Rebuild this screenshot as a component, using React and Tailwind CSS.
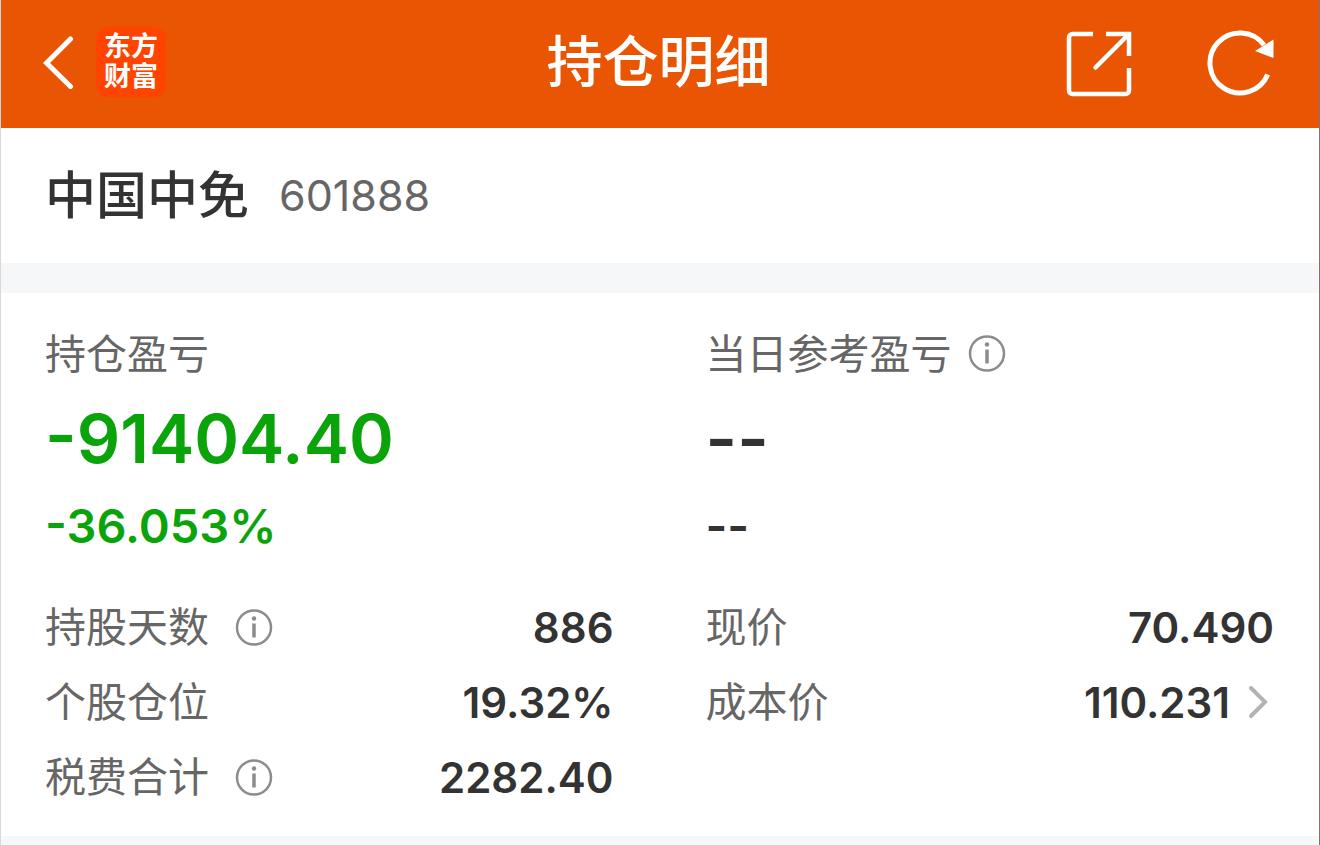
const cjk = "font-['Inter','Noto_Sans_CJK_SC',sans-serif]";

function BackIcon() {
  return (
    <svg viewBox="0 0 32 54" className="h-[54px] w-8" fill="none" stroke="currentColor" strokeWidth="5" strokeLinecap="round" aria-hidden="true">
      <path d="M27.500 4 3.500 28l24 23.500" />
    </svg>
  );
}

function ShareIcon() {
  return (
    <svg viewBox="0 0 66 66" className="h-[66px] w-[66px]" fill="none" stroke="currentColor" strokeWidth="4.5" aria-hidden="true">
      <path d="M27 3H6.500a3.500 3.500 0 0 0-3.500 3.500v53a3.500 3.500 0 0 0 3.500 3.500h53a3.500 3.500 0 0 0 3.500-3.500V37" />
      <path d="M40 3h23v22" />
      <path d="M62 4 29.500 36.500" strokeLinecap="round" />
    </svg>
  );
}

function RefreshIcon() {
  return (
    <svg viewBox="0 0 68 68" className="h-[68px] w-[68px]" fill="none" stroke="currentColor" strokeWidth="5" aria-hidden="true">
      <path d="M58 15A30 30 0 1 0 61.700 44.500" />
      <path d="M49 21 67.500 9.500v18.500z" fill="currentColor" stroke="none" />
    </svg>
  );
}

function InfoButton({ label }) {
  return (
    <button type="button" aria-label={label} className="text-[#8c8c8c]">
      <svg viewBox="0 0 38 38" className="h-[38px] w-[38px]" fill="none" stroke="currentColor" strokeWidth="2.5" aria-hidden="true">
        <circle cx="19" cy="18.500" r="17" />
        <path d="M19 14.500v14" strokeWidth="3.500" />
        <circle cx="19" cy="9.500" r="2.200" fill="currentColor" stroke="none" />
      </svg>
    </button>
  );
}

function Chevron() {
  return (
    <svg viewBox="0 0 20 36" className="h-9 w-5 text-[#b3b3b3]" fill="none" stroke="currentColor" strokeWidth="4" strokeLinecap="round" aria-hidden="true">
      <path d="M3 3 17 17 3 31" />
    </svg>
  );
}

function Row({ label, value, info, link }) {
  return (
    <div className="flex h-[75px] items-center justify-between">
      <dt className="flex items-center gap-[26px] text-[41px] text-[#666]">
        {label}
        {info && <InfoButton label={label + "说明"} />}
      </dt>
      <dd className="text-[42px] font-semibold text-[#333]">
        {link ? (
          <a href="#cost" className="flex items-center gap-[18px] pr-[6px]">
            {value}
            <Chevron />
          </a>
        ) : (
          value
        )}
      </dd>
    </div>
  );
}

function Profit({ title, info, amount, rate, tone }) {
  return (
    <div>
      <h2 className="flex h-[62px] items-center gap-4 text-[41px] text-[#666]">
        {title}
        {info && <InfoButton label={title + "说明"} />}
      </h2>
      <p className={"flex h-[106px] items-center text-[68px] font-semibold " + tone}>{amount}</p>
      <p className={"flex h-[68px] items-center text-[47px] font-semibold " + tone}>{rate}</p>
    </div>
  );
}

export default function App() {
  return (
    <div lang="zh-CN" className={"flex min-h-screen flex-col border-l border-r border-l-[#d9d9d9] border-r-[#777] bg-[#f6f7f9] leading-none " + cjk}>
      <header className="grid h-32 shrink-0 grid-cols-[1fr_auto_1fr] items-center bg-[#ea5504] pr-[45px] pl-[42px] text-white">
        <div className="flex items-center gap-[21px] pb-1">
          <button type="button" aria-label="返回">
            <BackIcon />
          </button>
          <span className="grid h-[70px] w-[70px] place-content-center rounded-[12px] bg-[#ff4400] text-[27px] leading-[30px] font-bold">
            <span>东方</span>
            <span>财富</span>
          </span>
        </div>
        <h1 className="pb-1 text-[56px] font-medium">持仓明细</h1>
        <div className="flex items-center justify-end gap-[74px]">
          <button type="button" aria-label="分享">
            <ShareIcon />
          </button>
          <button type="button" aria-label="刷新">
            <RefreshIcon />
          </button>
        </div>
      </header>

      <main>
        <section className="flex h-[135px] items-center gap-[30px] bg-white pr-[45px] pl-11">
          <span className="text-[51px] font-medium text-[#333]">中国中免</span>
          <span className="text-[43px] text-[#666]">601888</span>
        </section>

        <section className="mt-[30px] bg-white pt-[30px] pr-[45px] pb-[21px] pl-11">
          <div className="grid grid-cols-2 gap-x-[92px]">
            <Profit title="持仓盈亏" amount="-91404.40" rate="-36.053%" tone="text-[#0aa30a]" />
            <Profit title="当日参考盈亏" info amount="--" rate="--" tone="text-[#333]" />
          </div>
          <div className="mt-[31px] grid grid-cols-2 gap-x-[92px]">
            <dl>
              <Row label="持股天数" value="886" info />
              <Row label="个股仓位" value="19.32%" />
              <Row label="税费合计" value="2282.40" info />
            </dl>
            <dl>
              <Row label="现价" value="70.490" />
              <Row label="成本价" value="110.231" link />
            </dl>
          </div>
        </section>
      </main>
    </div>
  );
}
